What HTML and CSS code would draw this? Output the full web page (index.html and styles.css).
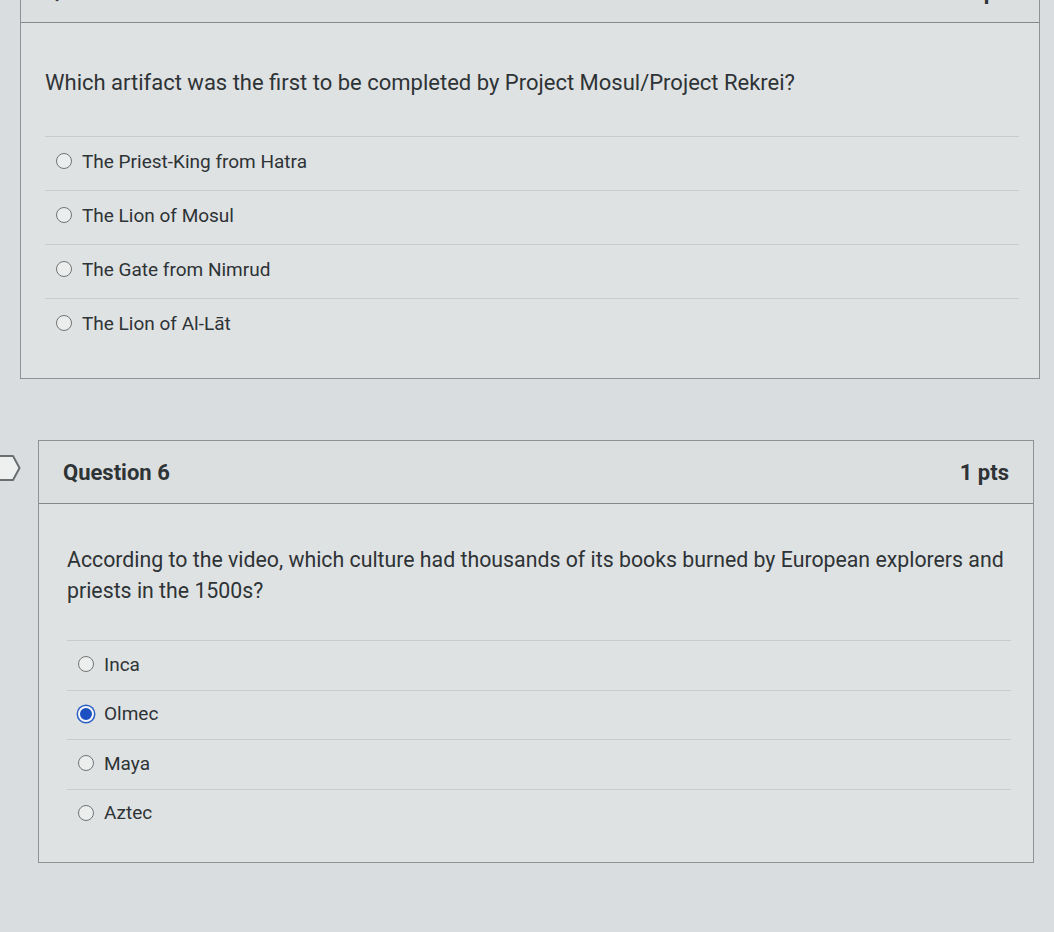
FILE: index.html
```html
<!DOCTYPE html>
<html lang="en">
<head>
  <meta charset="UTF-8">
  <meta name="viewport" content="width=device-width, initial-scale=1.0">
  <title>Quiz</title>
  <link rel="stylesheet" href="styles.css">
</head>
<body>
  <div class="quiz">
    <div class="question first">
      <div class="question-header">
        <span class="q-name">Question 5</span>
        <span class="q-pts">1 pts</span>
      </div>
      <div class="question-body">
        <p class="question-text">Which artifact was the first to be completed by Project Mosul/Project Rekrei?</p>
        <div class="answers">
          <label class="answer"><span class="radio"></span>The Priest-King from Hatra</label>
          <label class="answer"><span class="radio"></span>The Lion of Mosul</label>
          <label class="answer"><span class="radio"></span>The Gate from Nimrud</label>
          <label class="answer"><span class="radio"></span>The Lion of Al-Lāt</label>
        </div>
      </div>
    </div>

    <div class="question-row">
      <svg class="marker" width="22" height="28" viewBox="0 0 22 28">
        <path d="M-2 2 H13 L19.5 14 L13 26 H-2" fill="#eef0f0" stroke="#6a6e70" stroke-width="2" stroke-linejoin="round"/>
      </svg>
      <div class="question second">
        <div class="question-header">
          <span class="q-name">Question 6</span>
          <span class="q-pts">1 pts</span>
        </div>
        <div class="question-body">
          <p class="question-text">According to the video, which culture had thousands of its books burned by European explorers and priests in the 1500s?</p>
          <div class="answers">
            <label class="answer"><span class="radio"></span>Inca</label>
            <label class="answer"><span class="radio checked"></span>Olmec</label>
            <label class="answer"><span class="radio"></span>Maya</label>
            <label class="answer"><span class="radio"></span>Aztec</label>
          </div>
        </div>
      </div>
    </div>
  </div>
</body>
</html>
```

FILE: styles.css
```css
body {
  margin: 0;
  padding: 0;
  background-color: #dadddf;
  font-family: Roboto, "Liberation Sans", sans-serif;
  color: #2e3336;
  overflow: hidden;
}

.quiz {
  display: flex;
  flex-direction: column;
  gap: 61px;
}

.question {
  border: 1px solid #8e9294;
  background-color: #dfe2e3;
}

.question.first {
  margin: -41px 14px 0 20px;
}

.question-row {
  display: flex;
  align-items: flex-start;
}

.marker {
  margin-top: 14px;
  width: 22px;
  flex-shrink: 0;
}

.question.second {
  margin-left: 16px;
  width: 994px;
}

.question-header {
  height: 62px;
  display: flex;
  align-items: center;
  justify-content: space-between;
  padding: 0 24px;
  border-bottom: 1px solid #85898b;
  background-color: #dcdfe0;
  font-size: 22px;
  font-weight: 700;
}

.question-body {
  padding: 47px 0 26px;
}

.second .question-body {
  padding: 40px 0 24px;
}

.question-text {
  margin: 0 24px 40px;
  font-size: 22px;
  line-height: 26px;
}

.second .question-text {
  margin: 0 12px 34px 28px;
  font-size: 21.3px;
  line-height: 31px;
}

.answers {
  margin: 0 20px 0 24px;
}

.answer {
  display: flex;
  align-items: center;
  gap: 10px;
  height: 54px;
  padding: 0 0 5px 11px;
  box-sizing: border-box;
  border-top: 1px solid #c9cccd;
  font-size: 19px;
}

.second .answers {
  margin: 0 22px 0 28px;
}

.second .answer {
  height: 49.5px;
  padding-bottom: 2px;
}

.radio {
  width: 14px;
  height: 14px;
  border: 1.5px solid #707476;
  border-radius: 50%;
  background-color: #eceeee;
}

.radio.checked {
  width: 12px;
  height: 12px;
  background-color: #1b4fc2;
  border: 2px solid #f4f6f8;
  box-shadow: 0 0 0 1.5px #2c5fc6;
}
```
